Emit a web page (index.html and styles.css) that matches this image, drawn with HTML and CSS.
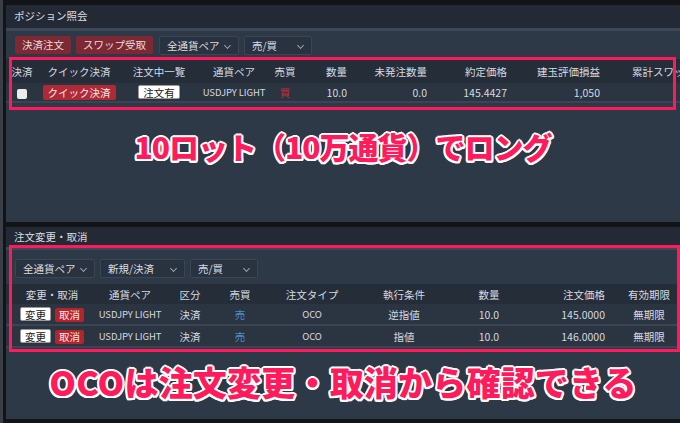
FILE: index.html
```html
<!DOCTYPE html>
<html lang="ja">
<head>
    <meta charset="UTF-8">
    <meta name="viewport" content="width=device-width, initial-scale=1.0">
    <title>ポジション照会</title>
    <link rel="stylesheet" href="styles.css">
</head>
<body>
    <div class="screen">
        <!-- ポジション照会 -->
        <section class="panel panel_pos">
            <div class="panel_title">ポジション照会</div>
            <div class="panel_body">
                <div class="toolbar">
                    <span class="btn btn_red">決済注文</span>
                    <span class="btn btn_red">スワップ受取</span>
                    <span class="select sel_pair">全通貨ペア<i class="chev"></i></span>
                    <span class="select sel_side">売/買<i class="chev"></i></span>
                </div>
                <div class="grid grid_pos">
                    <div class="head">
                        <span>決済</span><span>クイック決済</span><span>注文中一覧</span><span>通貨ペア</span><span>売買</span>
                        <span class="r">数量</span><span class="r">未発注数量</span><span class="r">約定価格</span><span class="r">建玉評価損益</span><span class="r">累計スワップ</span>
                    </div>
                    <div class="row">
                        <span><i class="check"></i></span>
                        <span><em class="tag tag_quick">クイック決済</em></span>
                        <span><em class="tag tag_white">注文有</em></span>
                        <span class="latin">USDJPY LIGHT</span>
                        <span class="buy">買</span>
                        <span class="r">10.0</span><span class="r">0.0</span><span class="r">145.4427</span><span class="r">1,050</span><span class="r"></span>
                    </div>
                </div>
                <p class="note note_1">10ロット（10万通貨）でロング</p>
            </div>
        </section>

        <!-- 注文変更・取消 -->
        <section class="panel panel_order">
            <div class="panel_title">注文変更・取消</div>
            <div class="panel_body">
                <div class="toolbar">
                    <span class="select sel_pair2">全通貨ペア<i class="chev"></i></span>
                    <span class="select sel_kind">新規/決済<i class="chev"></i></span>
                    <span class="select sel_side">売/買<i class="chev"></i></span>
                </div>
                <div class="grid grid_order">
                    <div class="head">
                        <span>変更・取消</span><span>通貨ペア</span><span>区分</span><span>売買</span><span>注文タイプ</span>
                        <span>執行条件</span><span>数量</span><span class="r">注文価格</span><span>有効期限</span>
                    </div>
                    <div class="row">
                        <span class="acts"><em class="tag tag_white">変更</em><em class="tag tag_cancel">取消</em></span>
                        <span class="latin">USDJPY LIGHT</span><span>決済</span><span class="sell">売</span><span class="latin">OCO</span>
                        <span>逆指値</span><span>10.0</span><span class="r">145.0000</span><span>無期限</span>
                    </div>
                    <div class="row">
                        <span class="acts"><em class="tag tag_white">変更</em><em class="tag tag_cancel">取消</em></span>
                        <span class="latin">USDJPY LIGHT</span><span>決済</span><span class="sell">売</span><span class="latin">OCO</span>
                        <span>指値</span><span>10.0</span><span class="r">146.0000</span><span>無期限</span>
                    </div>
                </div>
                <p class="note note_2">OCOは注文変更・取消から確認できる</p>
            </div>
        </section>

        <!-- 強調枠 -->
        <div class="mark mark_1"></div>
        <div class="mark mark_2"></div>
    </div>
</body>
</html>
```

FILE: styles.css
```css
*{
    margin: 0;
    padding: 0;
    box-sizing: border-box;
}
body{
    background: #121418;
    font-family: "Noto Sans CJK JP", "Noto Sans", sans-serif;
    font-size: 10.5px;
    color: #d5dae0;
}
em,i{
    font-style: normal;
}
.screen{
    width: 680px;
    height: 423px;
    position: relative;
    overflow: hidden;
    border-left: 3px solid #3a3f47;
    padding: 5px 0 4px 3px;
    display: flex;
    flex-direction: column;
    gap: 5px;
}
.panel{
    display: flex;
    flex-direction: column;
    overflow: hidden;
}
.panel_title{
    background: #232a35;
    height: 23px;
    line-height: 22px;
    padding-left: 8px;
    color: #d9dde2;
}
.panel_body{
    background: #2e3948;
    border-top: 3px solid #3c4858;
    flex: 1;
    display: flex;
    flex-direction: column;
}
.panel_pos{
    height: 217px;
}
.panel_order{
    flex: 1;
}
.panel_order .panel_title{
    height: 20px;
    line-height: 19px;
}

/* ツールバー */
.toolbar{
    display: flex;
    gap: 5px;
    padding: 5px 9px 0;
    height: 25px;
}
.panel_order .toolbar{
    padding-top: 9px;
    height: 34px;
}
.btn{
    height: 18px;
    line-height: 18px;
    padding: 0 7px;
    border-radius: 2px;
}
.btn_red{
    background: #7d2934;
    color: #eadadc;
}
.select{
    height: 19px;
    line-height: 18px;
    padding-left: 7px;
    background: #29323f;
    border: 1px solid #3a4555;
    border-radius: 2px;
    position: relative;
    color: #d9dde2;
}
.sel_pair{ width: 80px; margin-left: 1px; }
.sel_side{ width: 68px; }
.sel_pair2{ width: 80px; }
.sel_kind{ width: 85px; }
.chev{
    position: absolute;
    right: 8px;
    top: 6px;
    width: 5px;
    height: 5px;
    border-right: 1px solid #96a0ac;
    border-bottom: 1px solid #96a0ac;
    transform: rotate(45deg);
}

/* 表 */
.grid .head,.grid .row{
    display: grid;
    align-items: center;
    text-align: center;
    white-space: nowrap;
}
.grid_pos{
    margin-top: 3px;
}
.grid_pos .head,.grid_pos .row{
    grid-template-columns: 32px 82px 78px 72px 30px 50px 80px 80px 93px 95px;
    width: 692px;
}
.grid_order .head,.grid_order .row{
    grid-template-columns: 92px 64px 56px 44px 100px 84px 86px 77px 80px;
    width: 683px;
}
.grid .head{
    background: #252d39;
    height: 24px;
}
.grid_order .head{
    height: 20px;
}
.grid .row{
    background: #2b3441;
    border-bottom: 2px solid #3a4452;
    height: 20px;
}
.grid_order .row{
    height: 22px;
}
.grid .r{
    text-align: right;
    padding-right: 3px;
}
.grid_order .r{
    padding-right: 4px;
}
.latin{
    font-size: 9.5px;
    letter-spacing: -0.1px;
}
.check{
    display: inline-block;
    width: 10px;
    height: 10px;
    background: #ececec;
    border-radius: 2px;
    vertical-align: middle;
}
.tag{
    display: inline-block;
    height: 15px;
    line-height: 15px;
    padding: 0 4px;
    border-radius: 2px;
}
.tag_quick{
    background: #b02a36;
    color: #f3e6e8;
    padding: 0 5px;
}
.tag_white{
    background: #fff;
    color: #222;
    border: 1px solid #999;
    line-height: 13px;
    height: 14px;
}
.tag_cancel{
    background: #b3242f;
    color: #f6e6e8;
    height: 14px;
    line-height: 14px;
    margin-left: 4px;
}
.buy{
    color: #c0303b;
}
.sell{
    color: #4a90d4;
}

/* 注釈 */
.note{
    text-align: center;
    font-weight: 900;
    color: #ff1a5b;
    text-shadow: 2px 0 #fff, -2px 0 #fff, 0 2px #fff, 0 -2px #fff,
        1.5px 1.5px #fff, -1.5px -1.5px #fff, 1.5px -1.5px #fff, -1.5px 1.5px #fff,
        1px 2px #fff, -1px 2px #fff, 2px 1px #fff, -2px 1px #fff;
}
.note_1{
    font-size: 30px;
    line-height: 36px;
    letter-spacing: -1px;
    margin-top: 25px;
}
.note_2{
    font-size: 34px;
    line-height: 40px;
    letter-spacing: 0.2px;
    margin-top: 14px;
}

/* 強調枠 */
.mark{
    position: absolute;
    border: 3px solid #ff1a5b;
}
.mark_1{
    left: 6px;
    top: 57px;
    width: 667px;
    height: 53px;
}
.mark_2{
    left: 6px;
    top: 245px;
    width: 671px;
    height: 107px;
}
```
